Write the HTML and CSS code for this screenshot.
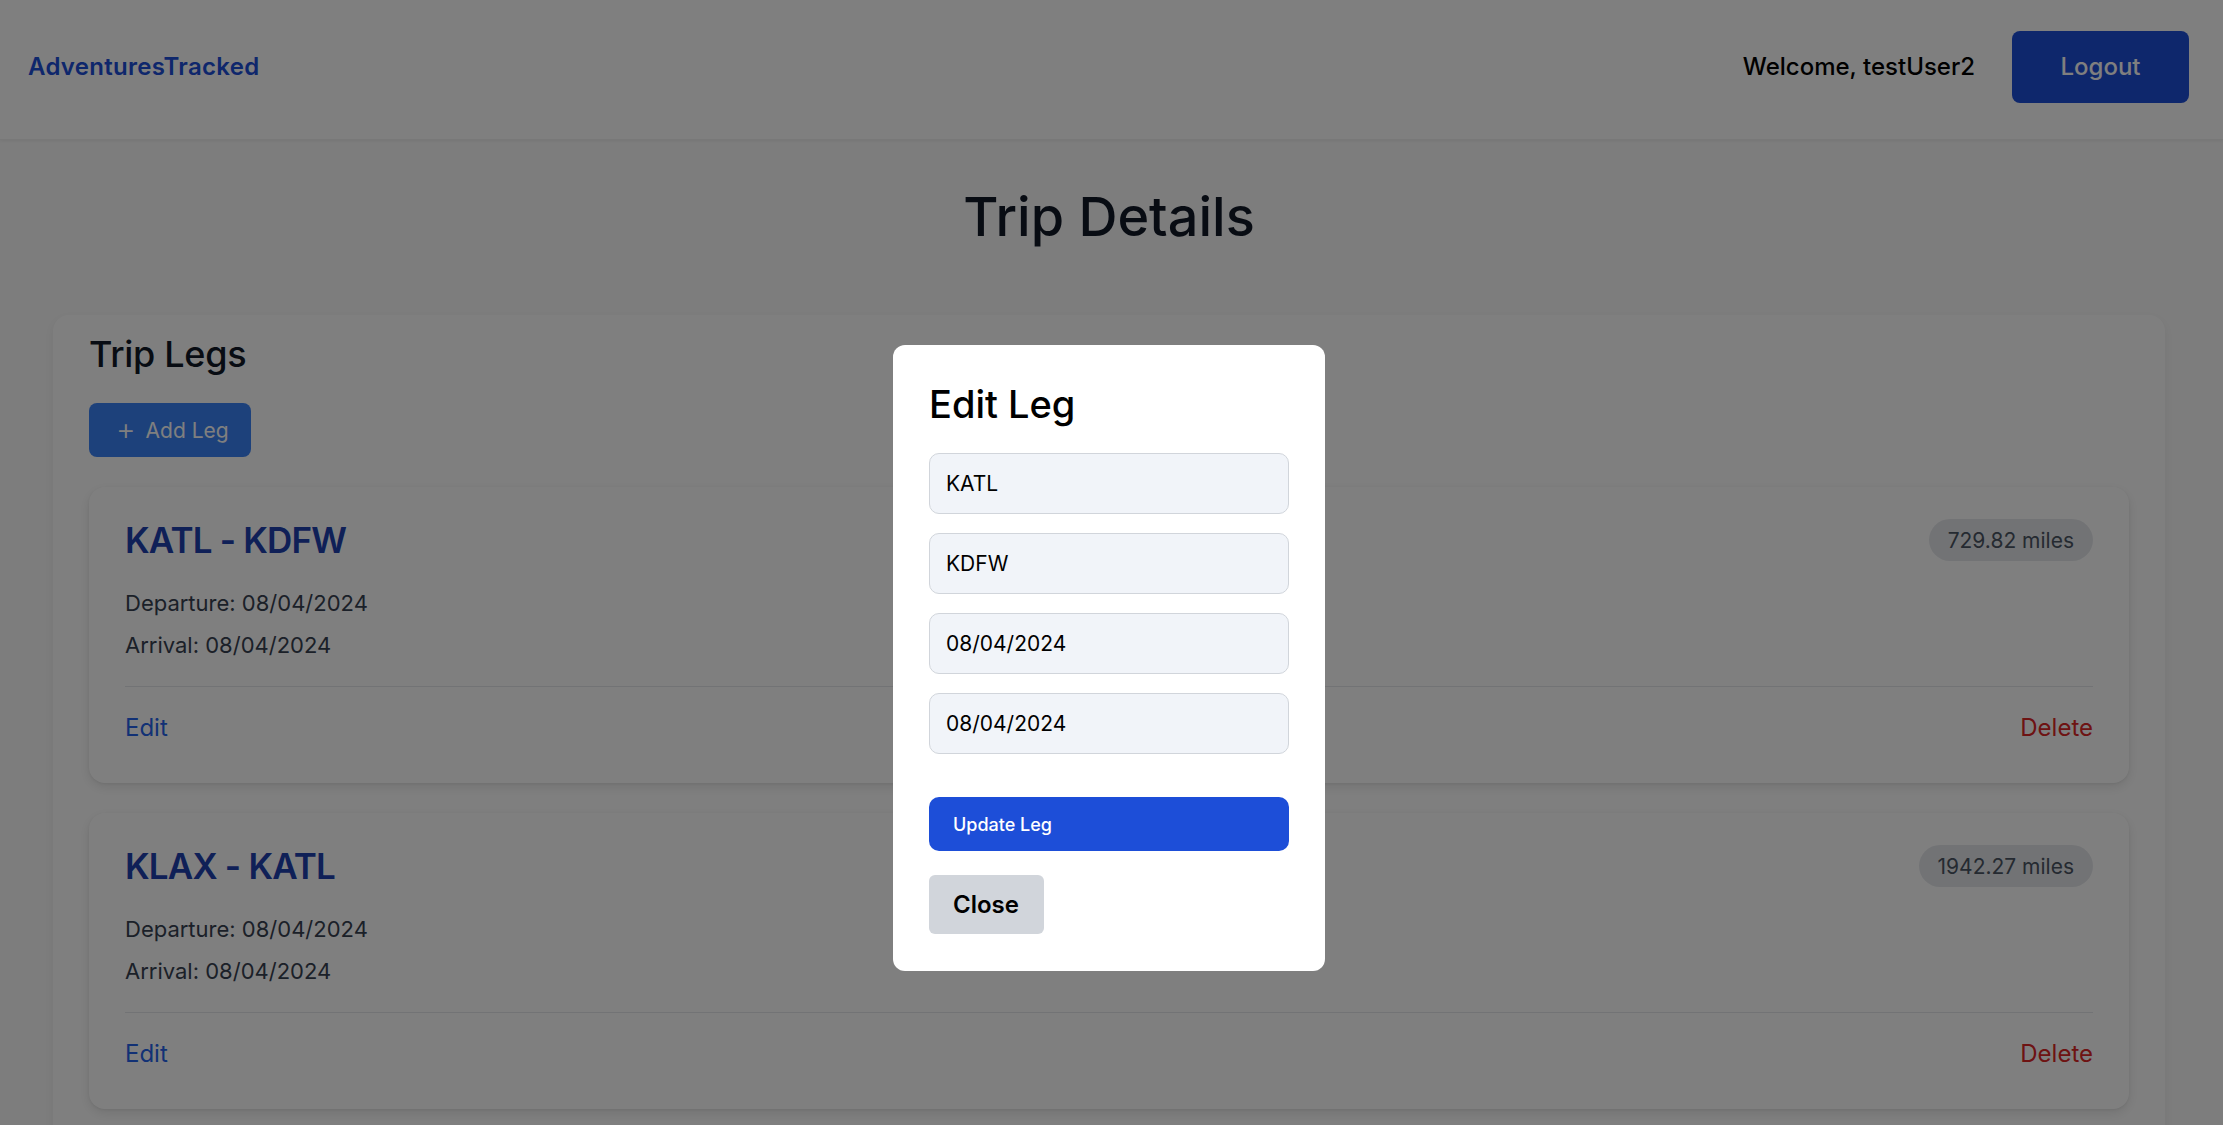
FILE: index.html
```html
<!DOCTYPE html>
<html lang="en">
<head>
<meta charset="utf-8">
<title>AdventuresTracked - Trip Details</title>
<link rel="stylesheet" href="styles.css">
</head>
<body>
<header class="topbar">
  <a class="brand" href="#">AdventuresTracked</a>
  <div class="user-area">
    <span class="welcome">Welcome, testUser2</span>
    <button class="btn-logout" type="button">Logout</button>
  </div>
</header>

<main class="page">
  <h1 class="page-title">Trip Details</h1>

  <section class="legs-panel">
    <h2 class="legs-title">Trip Legs</h2>
    <button class="btn-add" type="button"><span class="plus">+</span><span>Add Leg</span></button>

    <div class="leg-list">
      <article class="leg-card">
        <div class="leg-head">
          <h3 class="leg-route">KATL - KDFW</h3>
          <span class="miles">729.82 miles</span>
        </div>
        <p class="leg-date first">Departure: 08/04/2024</p>
        <p class="leg-date">Arrival: 08/04/2024</p>
        <div class="leg-actions">
          <a class="act-edit" href="#">Edit</a>
          <a class="act-delete" href="#">Delete</a>
        </div>
      </article>

      <article class="leg-card">
        <div class="leg-head">
          <h3 class="leg-route">KLAX - KATL</h3>
          <span class="miles">1942.27 miles</span>
        </div>
        <p class="leg-date first">Departure: 08/04/2024</p>
        <p class="leg-date">Arrival: 08/04/2024</p>
        <div class="leg-actions">
          <a class="act-edit" href="#">Edit</a>
          <a class="act-delete" href="#">Delete</a>
        </div>
      </article>
    </div>
  </section>
</main>

<div class="overlay">
  <div class="modal">
    <h2 class="modal-title">Edit Leg</h2>
    <form class="modal-form">
      <input class="field" type="text" value="KATL">
      <input class="field" type="text" value="KDFW">
      <input class="field" type="text" value="08/04/2024">
      <input class="field" type="text" value="08/04/2024">
      <button class="btn-update" type="button">Update Leg</button>
    </form>
    <button class="btn-close" type="button">Close</button>
  </div>
</div>
</body>
</html>
```

FILE: styles.css
```css
* { box-sizing: border-box; }

html, body {
  margin: 0;
  padding: 0;
}

body {
  font-family: Inter, "Open Sans", "DejaVu Sans", sans-serif;
  background: #fafafa;
  color: #111827;
  min-height: 1400px;
}

.topbar {
  height: 140px;
  background: #ffffff;
  border-bottom: 1px solid #f0f0f0;
  box-shadow: 0 1px 3px rgba(0,0,0,0.06);
  display: flex;
  align-items: center;
  justify-content: space-between;
  padding: 0 34px 6px 28px;
}

.brand {
  font-size: 24px;
  font-weight: 600;
  color: #1d4ed8;
  text-decoration: none;
  letter-spacing: 0.3px;
}

.user-area {
  display: flex;
  align-items: center;
  gap: 37px;
}

.welcome {
  font-size: 24px;
  font-weight: 500;
  color: #000;
}

.btn-logout {
  width: 177px;
  height: 72px;
  border: 0;
  border-radius: 8px;
  background: #1d4ed8;
  color: #fff;
  font-family: inherit;
  font-size: 24px;
  font-weight: 500;
}

.page {
  padding: 0 58px 0 53px;
}

.page-title {
  margin: 45px 0 0;
  text-align: center;
  font-size: 54px;
  line-height: 64px;
  font-weight: 500;
  color: #111827;
}

.legs-panel {
  margin-top: 66px;
  background: #ffffff;
  border-radius: 16px;
  box-shadow: 0 4px 10px rgba(0,0,0,0.06);
  padding: 17px 36px 40px;
}

.legs-title {
  margin: 0;
  font-size: 36px;
  line-height: 44px;
  font-weight: 500;
  letter-spacing: -0.3px;
  color: #111827;
}

.btn-add {
  margin-top: 27px;
  width: 162px;
  height: 54px;
  border: 0;
  border-radius: 8px;
  background: #3b82f6;
  color: #fff;
  font-family: inherit;
  font-size: 21px;
  display: flex;
  align-items: center;
  gap: 10px;
  padding: 0 0 0 27px;
}

.plus {
  font-size: 30px;
  font-weight: 300;
  line-height: 1;
  margin-top: -3px;
}

.leg-list {
  margin-top: 30px;
  display: flex;
  flex-direction: column;
  gap: 30px;
}

.leg-card {
  background: #ffffff;
  border-radius: 16px;
  box-shadow: 0 4px 12px rgba(0,0,0,0.10), 0 1px 3px rgba(0,0,0,0.06);
  padding: 31px 36px 40px;
}

.leg-head {
  display: flex;
  align-items: center;
  justify-content: space-between;
}

.leg-route {
  margin: 0;
  font-size: 35px;
  line-height: 44px;
  font-weight: 600;
  letter-spacing: -0.8px;
  color: #1e40af;
}

.miles {
  height: 42px;
  padding: 0 19px;
  display: flex;
  align-items: center;
  border-radius: 21px;
  background: #e5e7eb;
  color: #4b5563;
  font-size: 21px;
}

.leg-date {
  margin: 12px 0 0;
  font-size: 22px;
  line-height: 30px;
  color: #374151;
}

.leg-date.first {
  margin-top: 26px;
}

.leg-actions {
  margin-top: 26px;
  border-top: 1px solid #e5e7eb;
  padding-top: 26px;
  display: flex;
  justify-content: space-between;
  font-size: 24px;
  line-height: 30px;
}

.act-edit {
  color: #2563eb;
  text-decoration: none;
}

.act-delete {
  color: #dc2626;
  text-decoration: none;
}

.overlay {
  position: fixed;
  inset: 0;
  background: rgba(0,0,0,0.5);
  display: flex;
  justify-content: center;
  align-items: flex-start;
  padding: 345px 5px 0 0;
}

.modal {
  width: 432px;
  background: #ffffff;
  border-radius: 12px;
  padding: 35px 36px 37px;
}

.modal-title {
  margin: 0;
  font-size: 38px;
  line-height: 48px;
  font-weight: 500;
  color: #000;
}

.modal-form {
  margin-top: 25px;
  display: flex;
  flex-direction: column;
  gap: 19px;
}

.field {
  width: 360px;
  height: 61px;
  border: 1px solid #d1d5db;
  border-radius: 10px;
  background: #f1f4f9;
  padding: 0 16px;
  font-family: inherit;
  font-size: 21px;
  color: #000;
}

.btn-update {
  margin-top: 24px;
  width: 360px;
  height: 54px;
  border: 0;
  border-radius: 10px;
  background: #1d4ed8;
  color: #fff;
  font-family: inherit;
  font-size: 18px;
  font-weight: 500;
  text-align: left;
  padding: 0 24px;
}

.btn-close {
  margin-top: 24px;
  width: 115px;
  height: 59px;
  border: 0;
  border-radius: 6px;
  background: #d1d5db;
  color: #000;
  font-family: inherit;
  font-size: 24px;
  font-weight: 600;
  text-align: left;
  padding: 0 24px;
  display: block;
}
```
